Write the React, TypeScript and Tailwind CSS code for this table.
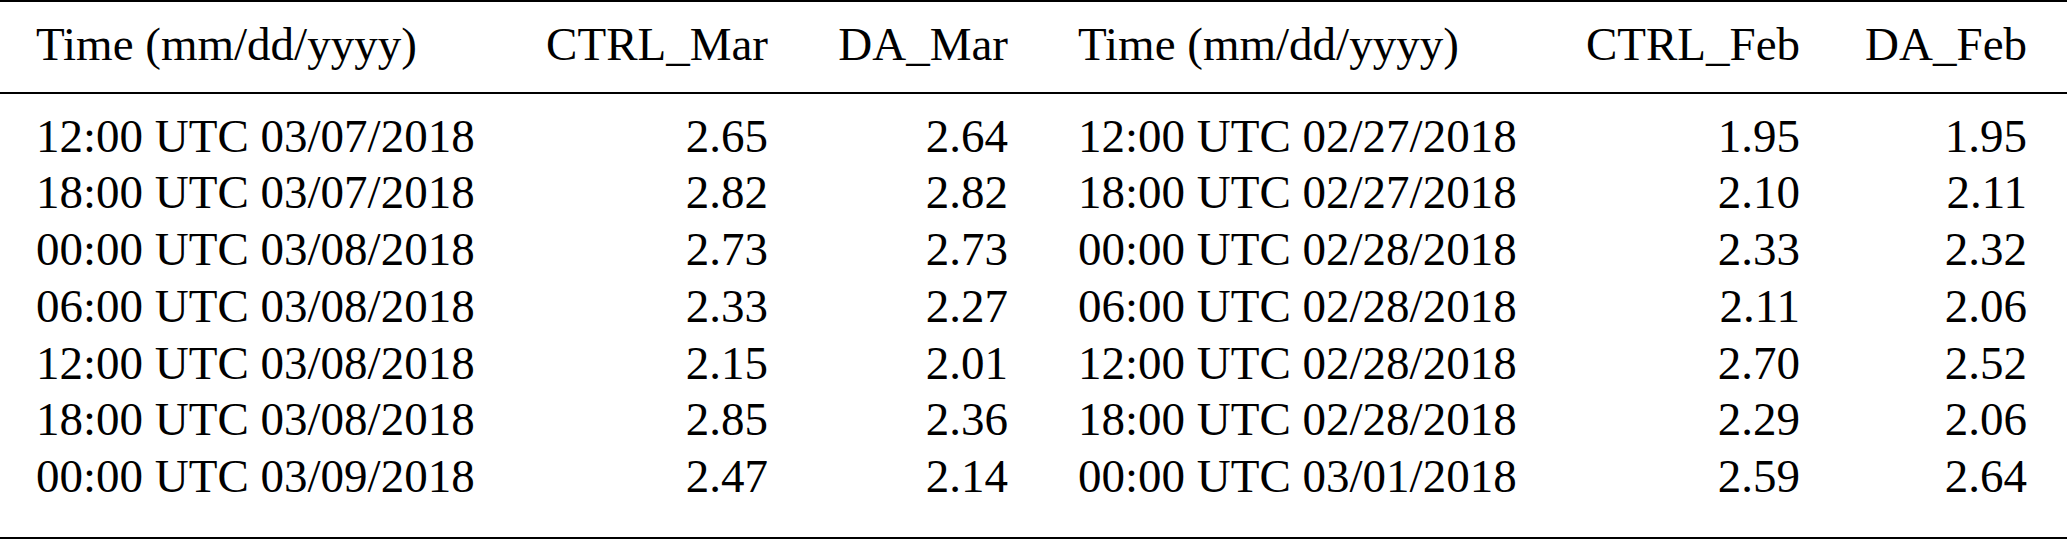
import React from 'react';

const rows: [string, string, string, string, string, string][] = [
  ['12:00 UTC 03/07/2018', '2.65', '2.64', '12:00 UTC 02/27/2018', '1.95', '1.95'],
  ['18:00 UTC 03/07/2018', '2.82', '2.82', '18:00 UTC 02/27/2018', '2.10', '2.11'],
  ['00:00 UTC 03/08/2018', '2.73', '2.73', '00:00 UTC 02/28/2018', '2.33', '2.32'],
  ['06:00 UTC 03/08/2018', '2.33', '2.27', '06:00 UTC 02/28/2018', '2.11', '2.06'],
  ['12:00 UTC 03/08/2018', '2.15', '2.01', '12:00 UTC 02/28/2018', '2.70', '2.52'],
  ['18:00 UTC 03/08/2018', '2.85', '2.36', '18:00 UTC 02/28/2018', '2.29', '2.06'],
  ['00:00 UTC 03/09/2018', '2.47', '2.14', '00:00 UTC 03/01/2018', '2.59', '2.64'],
];

const header = ['Time (mm/dd/yyyy)', 'CTRL_Mar', 'DA_Mar', 'Time (mm/dd/yyyy)', 'CTRL_Feb', 'DA_Feb'];

const Row = ({ cells, className = '' }: { cells: string[]; className?: string }) => (
  <div className={`grid grid-cols-[511px_292px_240px_510px_282px_232px] ${className}`}>
    <div className="pl-[36px] whitespace-nowrap">{cells[0]}</div>
    <div className="pr-[35px] text-right whitespace-nowrap">{cells[1]}</div>
    <div className="pr-[35px] text-right whitespace-nowrap">{cells[2]}</div>
    <div className="pl-[35px] whitespace-nowrap">{cells[3]}</div>
    <div className="pr-[35px] text-right whitespace-nowrap">{cells[4]}</div>
    <div className="pr-[40px] text-right whitespace-nowrap">{cells[5]}</div>
  </div>
);

export default function App() {
  return (
    <div className="w-[2067px] h-[541px] bg-white text-black text-[47px] leading-[56.7px] font-['Liberation_Serif','Times_New_Roman',serif] flex flex-col">
      <div className="border-t-2 border-black" />
      <Row cells={header} className="pt-[14px] pb-[19px]" />
      <div className="border-t-2 border-black" />
      <div className="flex-1 pt-[14px]">
        {rows.map((r, i) => (
          <Row key={i} cells={r} />
        ))}
      </div>
      <div className="border-t-2 border-black" />
      <div className="h-[2px]" />
    </div>
  );
}
